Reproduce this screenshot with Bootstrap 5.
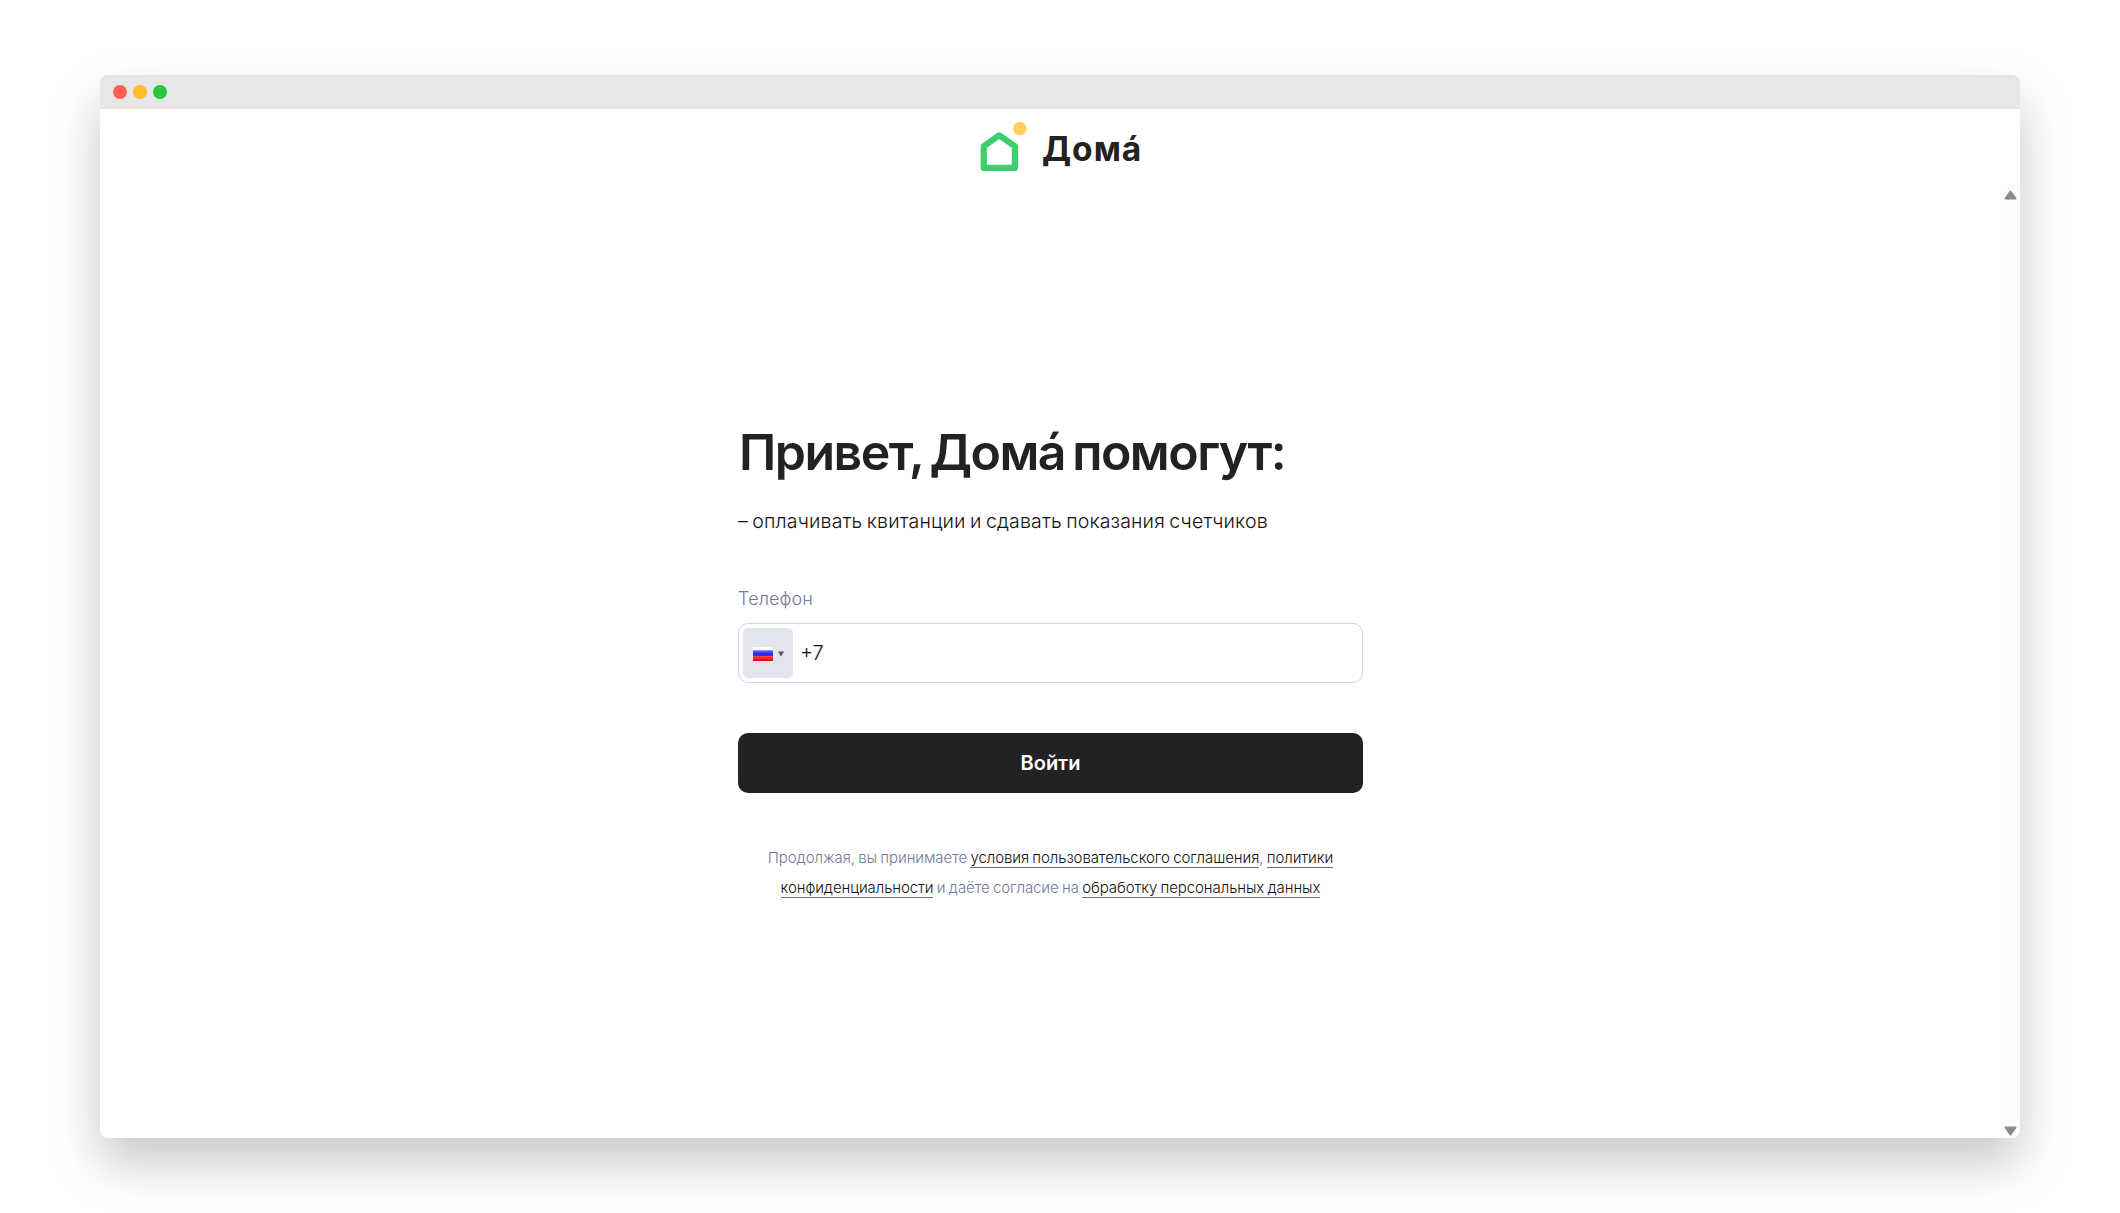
<!DOCTYPE html>
<html lang="ru">
<head>
<meta charset="utf-8">
<title>Дома</title>
<link href="https://cdn.jsdelivr.net/npm/bootstrap@5.3.0/dist/css/bootstrap.min.css" rel="stylesheet">
<style>
body{width:2120px;height:1213px;overflow:hidden;padding:75px 100px;background:#fff;color:#222;font-family:Inter,"Liberation Sans",sans-serif}
.window{height:1063px;border-radius:8px;box-shadow:0 25px 50px rgba(0,0,0,.22)}
.titlebar{height:34px;background:#e7e7e7;border-bottom:2px solid #f3dfce;padding:2px 0 0 13px;gap:6px}
.dot{width:14px;height:14px;border-radius:50%}
.dot-close{background:#ff5f57}
.dot-min{background:#febc2e}
.dot-max{background:#28c840}
.brand{height:75px;padding-left:880px}
.brand-name{font-size:33.5px;line-height:40px;font-weight:700;letter-spacing:1px;margin:20px 0 0 13px}
.scroller{width:19px;background:#fcfcfc;padding:6px 0 2px}
.login{width:625px;margin-left:638px;padding-top:238px}
h1{font-size:50px;line-height:60px;font-weight:600;letter-spacing:-1.5px;word-spacing:-4px;margin:0 0 0 1px}
.lead-text{font-size:19.5px;line-height:24px;font-weight:350;color:#111;letter-spacing:.16px;word-spacing:-1.2px;margin-top:27px}
.form-label{font-size:18px;line-height:24px;font-weight:350;letter-spacing:.1px;color:#73799a;margin:54px 0 0}
.phone{height:60px;border:1px solid #d0d3e5;border-radius:10px;padding:4px;margin-top:12px}
.country{width:50px;height:50px;border:0;border-radius:5px;background:#e1e5ed;padding:2px 0 0 10px;gap:5px}
.phone input{font-size:20px;font-weight:350;padding:0 7px;border:0;box-shadow:none!important;background:none;color:#111}
.enter{height:60px;margin-top:50px;border:0;border-radius:10px;background:#222;color:#fff;font-size:20px;font-weight:600;padding-top:5px}
.terms{font-size:15px;line-height:30px;font-weight:350;letter-spacing:-.08px;word-spacing:-.8px;color:#73799a;margin-top:50px}
.terms a{color:#111;text-decoration:none;border-bottom:1px solid #666f9b}
</style>
</head>
<body>
<div class="window d-flex flex-column overflow-hidden bg-white">
  <div class="titlebar d-flex align-items-center flex-shrink-0">
    <span class="dot dot-close"></span><span class="dot dot-min"></span><span class="dot dot-max"></span>
  </div>
  <header class="brand d-flex align-items-start flex-shrink-0">
    <svg width="49" height="75" viewBox="980 109 49 75" fill="none"><path d="M983.8 146.3 999.2 135.3 1014.9 146.3V167.9H983.8Z" stroke="#3ccf6c" stroke-width="6.2" stroke-linejoin="round"/><circle cx="1019.8" cy="128.5" r="6.7" fill="#ffce5c"/></svg>
    <div class="brand-name">Дома́</div>
  </header>
  <div class="d-flex flex-grow-1 justify-content-between">
    <main class="login">
      <h1 class="text-nowrap">Привет, Дома́ помогут:</h1>
      <p class="lead-text mb-0 text-nowrap">– оплачивать квитанции и сдавать показания счетчиков</p>
      <label class="form-label d-block" for="phone">Телефон</label>
      <div class="phone d-flex align-items-center">
        <button type="button" class="country d-flex align-items-center flex-shrink-0" aria-label="Россия">
          <svg width="20" height="14"><defs><linearGradient id="f" x2="0" y2="1"><stop offset="0" stop-color="#f5f6f8"/><stop offset=".2" stop-color="#fff"/><stop offset=".26" stop-color="#7272ff"/><stop offset=".45" stop-color="#2c2cf4"/><stop offset=".66" stop-color="#3030d8"/><stop offset=".67" stop-color="#f04848"/><stop offset="1" stop-color="#e00000"/></linearGradient></defs><rect width="20" height="14" fill="url(#f)"/></svg>
          <svg width="6" height="6"><path d="M0 .5H6L3 5.5Z" fill="#555"/></svg>
        </button>
        <input id="phone" class="form-control" type="tel" value="+7">
      </div>
      <button type="button" class="enter btn w-100">Войти</button>
      <p class="terms text-center mb-0 text-nowrap">Продолжая, вы принимаете <a href="#">условия пользовательского соглашения</a>, <a href="#">политики<br>конфиденциальности</a> и даёте согласие на <a href="#">обработку персональных данных</a></p>
    </main>
    <div class="scroller d-flex flex-column align-items-center justify-content-between">
      <svg width="13" height="10"><path d="M6.5 1.5 11.5 8.5H1.5Z" fill="#8b8b8b" stroke="#8b8b8b" stroke-width="2" stroke-linejoin="round"/></svg>
      <svg width="13" height="10"><path d="M6.5 8.5 11.5 1.5H1.5Z" fill="#8b8b8b" stroke="#8b8b8b" stroke-width="2" stroke-linejoin="round"/></svg>
    </div>
  </div>
</div>
<script src="https://cdn.jsdelivr.net/npm/bootstrap@5.3.0/dist/js/bootstrap.bundle.min.js"></script>
</body>
</html>
